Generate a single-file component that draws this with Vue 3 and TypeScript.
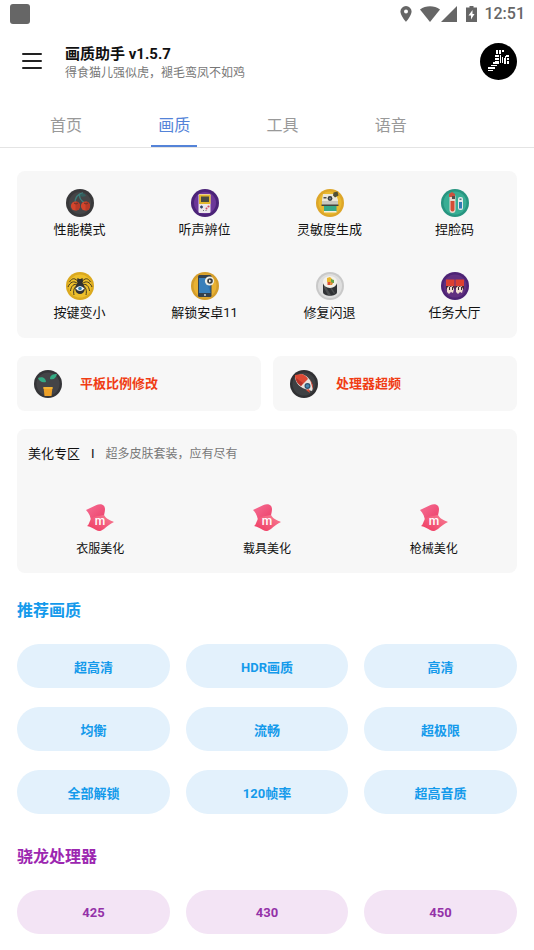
<script setup lang="ts">
import { ref } from 'vue'

interface Tool {
  icon: string
  label: string
}

interface Group {
  title: string
  tone: string
  options: string[]
}

const tabs: string[] = ['首页', '画质', '工具', '语音']
const activeTab = ref('画质')

const tools: Tool[] = [
  { icon: 'cherry', label: '性能模式' },
  { icon: 'console', label: '听声辨位' },
  { icon: 'camera', label: '灵敏度生成' },
  { icon: 'tubes', label: '捏脸码' },
  { icon: 'spider', label: '按键变小' },
  { icon: 'phone', label: '解锁安卓11' },
  { icon: 'sushi', label: '修复闪退' },
  { icon: 'hall', label: '任务大厅' },
]

const skins: string[] = ['衣服美化', '载具美化', '枪械美化']

const groups: Group[] = [
  {
    title: '推荐画质',
    tone: 'blue',
    options: ['超高清', 'HDR画质', '高清', '均衡', '流畅', '超极限', '全部解锁', '120帧率', '超高音质'],
  },
  { title: '骁龙处理器', tone: 'purple', options: ['425', '430', '450'] },
]
</script>

<template>
  <div class="app">
    <div class="status">
      <span class="status-app"></span>
      <div class="status-icons">
        <svg class="pin" viewBox="0 0 12 16" aria-hidden="true">
          <path fill-rule="evenodd" d="M6 0a5.600 5.600 0 0 0-5.600 5.600C.4 9.700 6 16 6 16s5.600-6.300 5.600-10.400A5.600 5.600 0 0 0 6 0zm0 3.600a2 2 0 1 1 0 4 2 2 0 0 1 0-4z" />
        </svg>
        <svg class="wifi" viewBox="0 0 20 16" aria-hidden="true">
          <path d="M0 3.500C5.800-.9 14.200-.9 20 3.500L10 16z" />
        </svg>
        <svg class="signal" viewBox="0 0 16 16" aria-hidden="true"><path d="M16 0v16H0z" /></svg>
        <svg class="battery" viewBox="0 0 11 16" aria-hidden="true">
          <path fill-rule="evenodd" d="M3.500 0h4v1.500H11V16H0V1.500h3.500zM6.500 4L2.500 9.500H5V13.500L8.500 8H6.500z" />
        </svg>
        <span class="clock">12:51</span>
      </div>
    </div>

    <header class="header">
      <button class="menu" type="button" aria-label="菜单">
        <svg viewBox="0 0 20 16" aria-hidden="true">
          <path d="M1 1h18M1 8h18M1 15h18" fill="none" stroke="#222" stroke-width="2" stroke-linecap="round" />
        </svg>
      </button>
      <div class="heading">
        <h1>画质助手 v1.5.7</h1>
        <p>得食猫儿强似虎，褪毛鸾凤不如鸡</p>
      </div>
      <button class="avatar" type="button" aria-label="账户">
        <svg viewBox="0 0 37 37" aria-hidden="true">
          <circle cx="18.500" cy="18.500" r="18.500" fill="#000" />
          <g fill="#fff">
            <path d="M16 7h2v4h-2zM19 7h2v4h-2zM22 7h2v2h-2zM15 12h4v2h-4zM15 15h4v2h-4zM15 18h4v3h-4zM20 12h1v8h-1zM22 14h1v6h-1zM24 15h1v6h-1zM25 13h1v8h-1zM26 12h3v2h-3zM27 15h2v2h-2zM27 18h2v3h-2z" />
            <path d="M13 19h5v2h-5zM11 22h6v1h-6zM8 24h7v2H8zM8 27h5v1H8z" />
          </g>
        </svg>
      </button>
    </header>

    <nav class="tabs">
      <button
        v-for="tab in tabs"
        :key="tab"
        type="button"
        :class="['tab', { active: tab === activeTab }]"
        @click="activeTab = tab"
      >
        <span>{{ tab }}</span>
      </button>
    </nav>

    <main class="content">
      <section class="card tools">
        <button v-for="tool in tools" :key="tool.label" class="tile" type="button">
          <svg class="icon" viewBox="0 0 28 28" aria-hidden="true">
            <g v-if="tool.icon === 'cherry'">
              <circle cx="14" cy="14" r="14" fill="#39393b" />
              <circle cx="14" cy="14" r="11" fill="#454547" />
              <path d="M9 14C9 9 12 5 17 4M19 14c-4-2-6-5-5-9" fill="none" stroke="#3c7e7c" stroke-width="1.300" />
              <path d="M14 6c2-3 5-2 6 1-3 1-5 1-6-1z" fill="#345f5e" />
              <circle cx="9.500" cy="17" r="4.600" fill="#d4452c" />
              <circle cx="19.500" cy="17" r="4.600" fill="#d4452c" />
              <path d="M9.500 12.400a4.600 4.600 0 0 1 0 9.200zM19.500 12.400a4.600 4.600 0 0 1 0 9.200z" fill="#b93a27" />
              <path d="M8 14l2 1 2-1M18 14l2 1 2-1" fill="none" stroke="#6d3129" />
            </g>
            <g v-else-if="tool.icon === 'console'">
              <circle cx="14" cy="14" r="14" fill="#4b2378" />
              <circle cx="14" cy="14" r="11" fill="#6c3799" />
              <rect x="7.500" y="5" width="12" height="19" rx="1.200" fill="#ece7ec" />
              <path d="M8 5.500h11.500V15H8z" fill="#e2b72d" />
              <path d="M10 7.500h8V13h-8z" fill="#484a43" />
              <path d="M9 18h3M10.500 16.500v3" stroke="#34466d" stroke-width="1.300" />
              <circle cx="17.500" cy="17.500" r="1.100" fill="#d24b67" />
              <circle cx="15.500" cy="19.500" r="1" fill="#d24b67" />
              <path d="M12 22l1-1M14.500 22l1-1" stroke="#777" />
            </g>
            <g v-else-if="tool.icon === 'camera'">
              <circle cx="14" cy="14" r="14" fill="#dda629" />
              <circle cx="14" cy="14" r="11.500" fill="#e9b92f" />
              <path d="M7 5h13l2 6v5H6v-5z" fill="#ebe7d9" />
              <path d="M6 12h16v4H6z" fill="#c9c7be" />
              <path d="M5.500 15.500h17V17h-17z" fill="#44453e" />
              <path d="M8 17h12.500v6H8z" fill="#37aa88" />
              <path d="M8 22h12.500v1.500H8z" fill="#f3eee0" />
              <circle cx="14" cy="9.500" r="2.400" fill="#353b42" />
              <circle cx="14" cy="9.500" r="1" fill="#708492" />
              <path d="M17.500 3.500l4-1 1 4-3.500 2-2-2z" fill="#505035" />
              <path d="M7.500 8h3v1.500h-3z" fill="#494b4a" />
            </g>
            <g v-else-if="tool.icon === 'tubes'">
              <circle cx="14" cy="14" r="14" fill="#279580" />
              <circle cx="14" cy="14" r="11.500" fill="#38ae94" />
              <rect x="8.500" y="5" width="6" height="19" rx="3" fill="#e6d9d0" />
              <path d="M9.500 12h4v8.500a2 2 0 0 1-4 0z" fill="#d34c34" />
              <path d="M8 5l3-2 3 2v3H8z" fill="#cb513f" />
              <path d="M11 7h3v3h-3z" fill="#544d4b" />
              <rect x="17" y="8" width="5" height="13" rx="2" fill="#e2e9e8" />
              <path d="M18 13h3v6.500h-3z" fill="#317cb5" />
              <path d="M18.500 9.500h2V11h-2z" fill="#547d86" />
            </g>
            <g v-else-if="tool.icon === 'spider'">
              <circle cx="14" cy="14" r="14" fill="#dba91f" />
              <circle cx="14" cy="14" r="11.500" fill="#edbf2b" />
              <path
                d="M13 11C9 5 6 6 3.500 10M12 12C8 8 4 10 2 15M12 13C8 11 5 14 4.500 19M12 14c-4 0-5 5-4 9M15 11c4-6 7-5 9.500-1M16 12c4-4 8-2 10 3M16 13c4-2 7 1 7.500 6M16 14c4 0 5 5 4 9"
                fill="none"
                stroke="#453a1d"
                stroke-width="1"
              />
              <path d="M11.500 6l2 1h1l2-1 .5 3-1 4h-4l-1-4z" fill="#30302c" />
              <ellipse cx="14" cy="16.500" rx="4.800" ry="5.500" fill="#303235" />
              <path d="M9.500 16.500q4.500-5 9 0-4.500 5-9 0z" fill="#eef3f5" />
              <circle cx="14" cy="16.500" r="1.800" fill="#3283b5" />
            </g>
            <g v-else-if="tool.icon === 'phone'">
              <circle cx="14" cy="14" r="14" fill="#d59e2b" />
              <circle cx="14" cy="14" r="11.500" fill="#e9b234" />
              <rect x="7" y="3" width="13.500" height="22" rx="1.500" fill="#34414e" />
              <path d="M8 6h11.500v15H8z" fill="#2c72af" />
              <path d="M8 6h6l5.500 15H8z" fill="#387fba" />
              <circle cx="14" cy="23" r=".9" fill="#e6e6df" />
              <circle cx="18.500" cy="9" r="4.600" fill="#eeeee5" />
              <circle cx="19" cy="9" r="2.800" fill="#343a40" />
              <path d="M18 7.500l2.500 1.500-2.500 1.500z" fill="#f2f2ef" />
            </g>
            <g v-else-if="tool.icon === 'sushi'">
              <circle cx="14" cy="14" r="14" fill="#c9c9c9" />
              <circle cx="14" cy="14" r="12" fill="#dedede" />
              <path d="M7 10h14v10c0 5-14 5-14 0z" fill="#303235" />
              <path d="M8 16l4 7h3l-7-11zM14 16l4 6 1-1-4-6z" fill="#4c4e50" />
              <ellipse cx="14" cy="10" rx="7.200" ry="6" fill="#f4f1e9" />
              <path d="M11 6l3-1 2 2-1 4-4-1z" fill="#e9b52c" />
              <path d="M15 7l3 1v3h-3z" fill="#68a54b" />
              <path d="M11.500 10h3v3h-3z" fill="#db5032" />
              <path d="M15 10l2 1-1 2h-2z" fill="#df8c30" />
            </g>
            <g v-else>
              <circle cx="14" cy="14" r="14" fill="#4d2375" />
              <circle cx="14" cy="14" r="11.500" fill="#613080" />
              <path d="M5 7.500h8.500v7H5zM14.500 7.500H23v7h-8.500z" fill="#dd4030" />
              <path d="M5 14h8.500v3H5zM14.500 14H23v3h-8.500z" fill="#452734" />
              <path d="M6 16l2-2 1.500 1 2-1L13 17l-1 4-2-1-2 2-2-2zM15 16l2-2 1.500 1 2-1L22 17l-1 4-2-1-2 2-2-2z" fill="#f2dfd0" />
              <path d="M8 15h1v3H8zM11 15h1v3h-1zM17 15h1v3h-1zM20 15h1v3h-1z" fill="#35262e" />
            </g>
          </svg>
          <span>{{ tool.label }}</span>
        </button>
      </section>

      <div class="pair">
        <button class="card action" type="button">
          <svg class="icon" viewBox="0 0 28 28" aria-hidden="true">
            <circle cx="14" cy="14" r="14" fill="#353538" />
            <circle cx="14" cy="14" r="11.500" fill="#444447" />
            <path d="M14 18V9M14 13l-4-3M14 12l4-4" stroke="#3b4c4c" />
            <path d="M4 8c4-2 8 0 8 4-4 1-7-1-8-4zM16 9c0-4 3-5 7-5-1 4-3 6-7 5z" fill="#35aa83" />
            <path d="M9.500 17h9l-1 9h-7z" fill="#eda027" />
            <path d="M9.500 17h9v2h-9z" fill="#f2b333" />
          </svg>
          <span>平板比例修改</span>
        </button>
        <button class="card action" type="button">
          <svg class="icon" viewBox="0 0 28 28" aria-hidden="true">
            <circle cx="14" cy="14" r="14" fill="#303033" />
            <circle cx="14" cy="14" r="11.500" fill="#3e4043" />
            <path d="M5 6l7-2c6 2 10 7 11 14l-1 3-4-1C10 18 5 13 5 6z" fill="#e9e4df" />
            <path d="M5 5l7-1c3 1 5 3 6 5l-7 7C7 13 5 10 5 5z" fill="#dc4934" />
            <path d="M6 8l7 5-2 3c-3-2-5-5-5-8z" fill="#b83329" />
            <path d="M20 9l3 6v5z" fill="#c74636" />
            <circle cx="17.500" cy="16" r="3" fill="#2b526c" />
            <circle cx="17.500" cy="16" r="1.800" fill="#4687ae" />
            <path d="M16 20l4 3-1-4z" fill="#dc4934" />
          </svg>
          <span>处理器超频</span>
        </button>
      </div>

      <section class="card skins">
        <div class="skins-head">
          <h2>美化专区</h2>
          <span class="divider">I</span>
          <p>超多皮肤套装，应有尽有</p>
        </div>
        <div class="skins-grid">
          <button v-for="(skin, index) in skins" :key="skin" class="tile skin" type="button">
            <svg class="icon" viewBox="0 0 28 28" aria-hidden="true">
              <defs>
                <linearGradient :id="`top-${index}`" x1="0" y1="0" x2="1" y2="1">
                  <stop offset="0" stop-color="#f66f94" />
                  <stop offset="1" stop-color="#ec3e68" />
                </linearGradient>
                <linearGradient :id="`base-${index}`" x1="0" y1="1" x2="1" y2="0">
                  <stop offset="0" stop-color="#ef365f" />
                  <stop offset="1" stop-color="#f78197" />
                </linearGradient>
              </defs>
              <path d="M0 6L10 1.200C14-.8 19 0 19 5c0 3-1 5-1 7L5 18C5 13 3 9 0 6z" :fill="`url(#top-${index})`" />
              <path d="M5 15c3-3 8-3 13-4 2 4 6 5 10 7-4 2-7 4-10 7-3 2-5 3-8 1-3-2-5-3-9-4 2-1 2-4 4-7z" :fill="`url(#base-${index})`" />
              <text x="14" y="21" text-anchor="middle" fill="#fff" font-size="12" font-weight="500">m</text>
            </svg>
            <span>{{ skin }}</span>
          </button>
        </div>
      </section>

      <section v-for="group in groups" :key="group.title" :class="['group', group.tone]">
        <h2>{{ group.title }}</h2>
        <div class="options">
          <button v-for="option in group.options" :key="option" type="button">{{ option }}</button>
        </div>
      </section>
    </main>
  </div>
</template>

<style>
body {
  background: #fff;
}
</style>

<style scoped>
.app {
  font-family: Roboto, "Noto Sans CJK SC", sans-serif;
  color: #111;
  background: #fff;
}

h1,
h2,
p {
  margin: 0;
}

button {
  margin: 0;
  padding: 0;
  border: 0;
  background: none;
  font: inherit;
  color: inherit;
  cursor: pointer;
}

svg {
  display: block;
}

.status {
  display: flex;
  align-items: center;
  justify-content: space-between;
  height: 27px;
  padding: 0 9px 0 10px;
}

.status-app {
  width: 20px;
  height: 20px;
  border-radius: 3px;
  background: #666;
}

.status-icons {
  display: flex;
  align-items: center;
  color: #666;
  fill: #666;
}

.status-icons svg {
  height: 16px;
}

.pin {
  width: 12px;
  margin-right: 8px;
}

.wifi {
  width: 20px;
  margin-right: 1px;
}

.signal {
  width: 16px;
  margin-right: 9px;
}

.battery {
  width: 11px;
  margin-right: 7px;
}

.clock {
  font-size: 16px;
  line-height: 20px;
  font-weight: 500;
}

.header {
  display: flex;
  align-items: center;
  height: 68px;
  padding: 0 17px 0 22px;
}

.menu svg {
  width: 20px;
  height: 16px;
}

.heading {
  flex: 1;
  padding: 3px 0 0 23px;
}

.heading h1 {
  font-size: 15px;
  line-height: 20px;
  font-weight: 700;
}

.heading p {
  font-size: 12px;
  line-height: 18px;
  color: #777;
}

.avatar svg {
  width: 37px;
  height: 37px;
}

.tabs {
  display: flex;
  height: 52px;
  padding: 0 89px 0 12px;
  border-bottom: 1px solid #e4e4e4;
}

.tab {
  flex: 1;
  display: flex;
  justify-content: center;
  font-size: 16px;
  line-height: 24px;
  color: #999;
}

.tab span {
  box-sizing: border-box;
  height: 52px;
  padding: 19px 7px 0;
  border-bottom: 2px solid transparent;
}

.tab.active {
  color: #5483d8;
}

.tab.active span {
  border-bottom-color: #5483d8;
}

.content {
  padding: 23px 17px 16px;
}

.card {
  border-radius: 8px;
  background: #f7f7f7;
}

.tools {
  display: grid;
  grid-template-columns: repeat(4, 1fr);
  row-gap: 30px;
  padding: 18px 0 13px;
}

.tile {
  display: flex;
  flex-direction: column;
  align-items: center;
  gap: 1px;
  font-size: 13px;
  line-height: 24px;
}

.icon {
  flex: none;
  width: 28px;
  height: 28px;
}

.pair {
  display: grid;
  grid-template-columns: 1fr 1fr;
  gap: 12px;
  margin: 18px 0;
}

.action {
  display: flex;
  align-items: center;
  gap: 18px;
  height: 55px;
  padding: 0 17px;
  font-size: 13px;
  line-height: 24px;
  font-weight: 700;
  color: #f03c14;
}

.skins {
  padding: 13px 0 12px;
}

.skins-head {
  display: flex;
  align-items: center;
  padding: 0 11px;
  line-height: 24px;
}

.skins-head h2 {
  font-size: 13px;
  font-weight: 400;
}

.skins-head p {
  font-size: 12px;
  color: #777;
}

.divider {
  padding: 0 11px;
  font-size: 13px;
}

.skins-grid {
  display: grid;
  grid-template-columns: repeat(3, 1fr);
  padding-top: 38px;
}

.skin {
  gap: 5px;
  font-size: 12px;
}

.group {
  padding-top: 26px;
}

.group + .group {
  padding-top: 31px;
}

.group h2 {
  margin-bottom: 21px;
  font-size: 16px;
  line-height: 24px;
  font-weight: 700;
}

.options {
  display: grid;
  grid-template-columns: 153fr 162fr 153fr;
  gap: 19px 16px;
}

.options button {
  height: 44px;
  border-radius: 22px;
  font-size: 13px;
  font-weight: 700;
}

.blue {
  color: #149aeb;
}

.blue button {
  background: #e3f1fc;
  color: #149aeb;
}

.purple {
  color: #9c27b0;
}

.purple button {
  background: #f3e4f5;
  color: #9432a8;
}
</style>
